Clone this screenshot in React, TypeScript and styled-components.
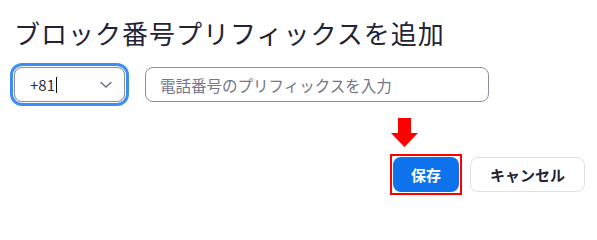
import React from 'react';
import styled, { createGlobalStyle } from 'styled-components';

const Global = createGlobalStyle`
    body {
        margin:0;
        background:#fff;
        font-family:"Noto Sans CJK JP", "Noto Sans", sans-serif;
    }
`

const Dialog = styled.div`
    width:597px;
    height:209px;
    box-sizing:border-box;
    padding:20px 12px 0 14px;
`

const Title = styled.h1`
    margin:0;
    font-size:26px;
    line-height:26px;
    font-weight:400;
    letter-spacing:1px;
    color:#232333;
`

const Row = styled.div`
    display:flex;
    align-items:center;
    gap:20px;
    margin-top:21px;
`

const Select = styled.div`
    width:111px;
    height:35px;
    box-sizing:border-box;
    border:1px solid #8e8e9c;
    border-radius:8px;
    box-shadow:0 0 0 1px #fff, 0 0 0 4px #3d8ef2;
    display:flex;
    align-items:center;
    padding:0 10px 0 15px;
    font-size:15px;
    color:#2e2e3a;
`

const Caret = styled.span`
    display:inline-block;
    width:1px;
    height:16px;
    background:#111;
    margin-left:1px;
`

const Chevron = styled.svg`
    margin-left:auto;
    margin-right:1px;
`

const Input = styled.input`
    width:344px;
    height:35px;
    box-sizing:border-box;
    border:1px solid #8e8e9c;
    border-radius:8px;
    padding:0 14px;
    font-family:inherit;
    font-size:15.5px;
    color:#232333;
    outline:none;
    &::placeholder { color:#76768a; }
`

const Footer = styled.div`
    display:flex;
    justify-content:flex-end;
    align-items:center;
    gap:8px;
    margin-top:52px;
`

const Highlight = styled.div`
    position:relative;
    border:2px solid #ff0000;
    padding:1px;
`

const Arrow = styled.svg`
    position:absolute;
    left:-1px;
    top:-38px;
`

const Button = styled.button<{ $primary?: boolean }>`
    height:35px;
    box-sizing:border-box;
    border-radius:8px;
    font-family:inherit;
    font-size:15px;
    font-weight:700;
    padding:0;
    width:${p => p.$primary ? '66px' : '115px'};
    background:${p => p.$primary ? '#0e72ed' : '#fff'};
    color:${p => p.$primary ? '#fff' : '#232333'};
    border:${p => p.$primary ? 'none' : '1px solid #dfe0e6'};
`

const App = () => (
    <>
        <Global />
        <Dialog>
            <Title>ブロック番号プリフィックスを追加</Title>
            <Row>
                <Select>
                    +81<Caret />
                    <Chevron width="14" height="8" viewBox="0 0 14 8">
                        <path d="M2 1.5 L7 6 L12 1.5" fill="none" stroke="#6e6e7e" strokeWidth="1.4" strokeLinecap="round" />
                    </Chevron>
                </Select>
                <Input placeholder="電話番号のプリフィックスを入力" />
            </Row>
            <Footer>
                <Highlight>
                    <Arrow width="27" height="29" viewBox="0 0 27 29">
                        <path d="M7 0 H20 V15 H27 L13.5 29 L0 15 H7 Z" fill="#ff0000" />
                    </Arrow>
                    <Button $primary>保存</Button>
                </Highlight>
                <Button>キャンセル</Button>
            </Footer>
        </Dialog>
    </>
)

export default App;
